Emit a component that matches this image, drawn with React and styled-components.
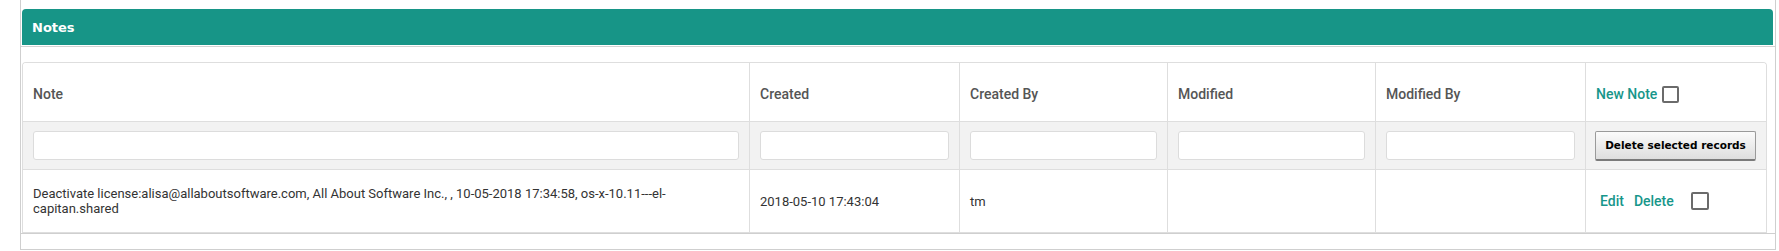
import React from 'react'
import styled, { createGlobalStyle } from 'styled-components'

const GlobalStyle = createGlobalStyle`
    html, body {
        margin: 0;
        padding: 0;
        background: #ffffff;
    }
    body {
        font-family: Roboto, "Liberation Sans", Arial, sans-serif;
    }
`;

const Panel = styled.section`
    margin-left: 20px;
    width: 1756px;
    box-sizing: border-box;
    padding-top: 9px;
    border: 1px solid #cfcfcf;
    border-top: none;
`;

const PanelHeader = styled.header`
    margin: 0 2px 1px 1px;
    height: 36px;
    display: flex;
    align-items: center;
    padding-left: 10px;
    background-color: #179587;
    border-radius: 4px 4px 0 0;
    color: #ffffff;
    font-family: "DejaVu Sans", Verdana, sans-serif;
    font-weight: bold;
    font-size: 13px;
`;

const PanelBody = styled.div`
    border-top: 1px solid #d2d2d2;
    padding-top: 15px;
`;

const TableBox = styled.div`
    margin-left: 1px;
    width: 1745px;
    box-sizing: border-box;
    border: 1px solid #dedede;
    border-bottom: none;
    border-radius: 4px 4px 0 0;
    overflow: hidden;
`;

const Table = styled.table`
    width: 100%;
    table-layout: fixed;
    border-collapse: separate;
    border-spacing: 0;
`;

const Col = styled.col`
    width: ${p => p.$w}px;
`;

const Row = styled.tr`
    background: ${p => (p.$filter ? '#f2f2f2' : '#ffffff')};
`;

const Cell = styled.td`
    height: ${p => p.$h}px;
    padding: ${p => (p.$head ? '4px 10px 0' : '0 10px')};
    box-sizing: border-box;
    vertical-align: middle;
    border-right: 1px solid #dedede;
    border-bottom: 1px solid #dedede;
    color: ${p => (p.$head ? '#555555' : '#333333')};
    font-size: ${p => (p.$head ? '14px' : '13px')};
    font-weight: ${p => (p.$head ? 500 : 400)};
    line-height: 15px;
    text-align: left;

    &:last-child {
        border-right: none;
    }
`;

const FilterInput = styled.input`
    display: block;
    width: 100%;
    height: 29px;
    box-sizing: border-box;
    margin: 0;
    border: 1px solid #dcdcdc;
    border-radius: 3px;
    background: #ffffff;
    outline: none;
`;

const DeleteButton = styled.button`
    display: block;
    width: 161px;
    height: 30px;
    margin-left: -1px;
    padding: 0;
    border: 1px solid #9a9a9a;
    border-bottom: 2px solid #7a7a7a;
    border-radius: 2px;
    background: linear-gradient(#fbfbfb, #dedede);
    color: #000000;
    font-family: "DejaVu Sans", Verdana, sans-serif;
    font-weight: bold;
    font-size: 10.5px;
    cursor: pointer;
`;

const Actions = styled.div`
    display: flex;
    align-items: center;
    padding-left: ${p => p.$indent || 0}px;
`;

const TealLink = styled.a`
    color: #17968a;
    font-size: 14px;
    font-weight: 500;
    text-decoration: none;
    margin-right: ${p => p.$gap}px;
    cursor: pointer;
`;

const Check = styled.span`
    display: inline-block;
    width: ${p => p.$size}px;
    height: ${p => p.$size}px;
    box-sizing: border-box;
    border: 2px solid #6b6b6b;
    border-radius: 2px;
    background: #ffffff;
`;

const Footer = styled.div`
    border-top: 1px solid #cfcfcf;
    height: 15px;
`;

const columns = [727, 210, 208, 208, 210, 180]
const headings = ['Note', 'Created', 'Created By', 'Modified', 'Modified By']

const App = () => {
    return (
        <>
            <GlobalStyle />
            <Panel>
                <PanelHeader>Notes</PanelHeader>
                <PanelBody>
                    <TableBox>
                        <Table>
                            <colgroup>
                                {columns.map((w, i) => <Col key={i} $w={w} />)}
                            </colgroup>
                            <tbody>
                                <Row>
                                    {headings.map(h => (
                                        <Cell key={h} $head $h={59}>{h}</Cell>
                                    ))}
                                    <Cell $head $h={59}>
                                        <Actions>
                                            <TealLink $gap={5}>New Note</TealLink>
                                            <Check $size={17} />
                                        </Actions>
                                    </Cell>
                                </Row>
                                <Row $filter>
                                    {headings.map(h => (
                                        <Cell key={h} $h={48}><FilterInput type="text" /></Cell>
                                    ))}
                                    <Cell $h={48}>
                                        <DeleteButton>Delete selected records</DeleteButton>
                                    </Cell>
                                </Row>
                                <Row>
                                    <Cell $h={63}>
                                        Deactivate license:alisa@allaboutsoftware.com, All About Software Inc., , 10-05-2018 17:34:58, os-x-10.11---el-capitan.shared
                                    </Cell>
                                    <Cell $h={63}>2018-05-10 17:43:04</Cell>
                                    <Cell $h={63}>tm</Cell>
                                    <Cell $h={63}></Cell>
                                    <Cell $h={63}></Cell>
                                    <Cell $h={63}>
                                        <Actions $indent={4}>
                                            <TealLink $gap={10}>Edit</TealLink>
                                            <TealLink $gap={17}>Delete</TealLink>
                                            <Check $size={18} />
                                        </Actions>
                                    </Cell>
                                </Row>
                            </tbody>
                        </Table>
                    </TableBox>
                    <Footer />
                </PanelBody>
            </Panel>
        </>
    )
}

export default App
